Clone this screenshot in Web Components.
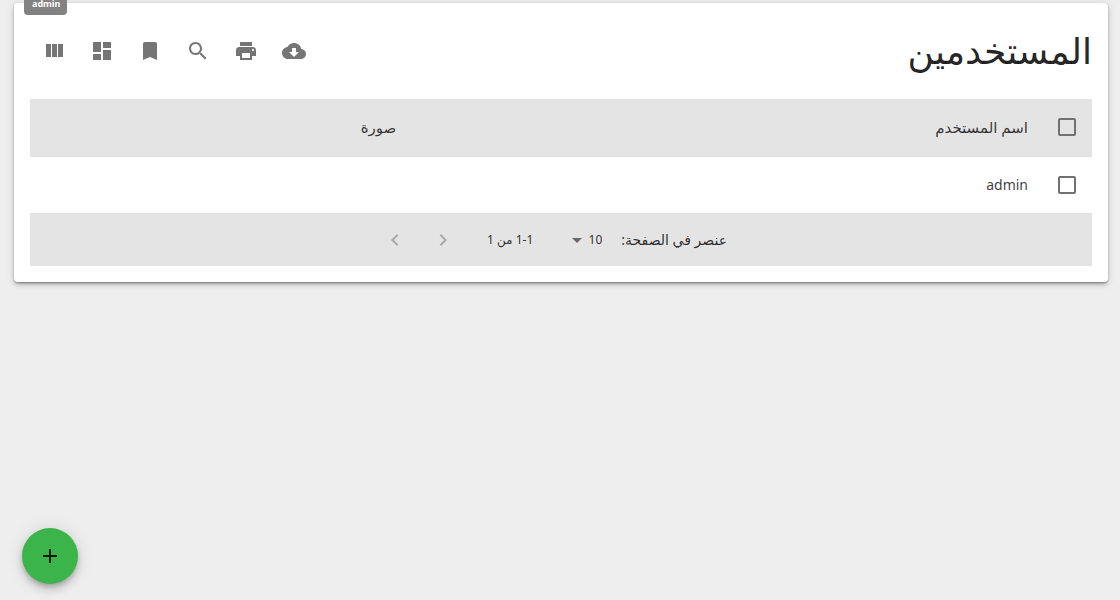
<!DOCTYPE html>
<html lang="ar" dir="rtl">
<head>
<meta charset="utf-8">
<title>المستخدمين</title>
<style>
html{background:#eee}
body{margin:0;min-height:100vh;padding:3px 12px 16px 14px;box-sizing:border-box;font-family:"Noto Sans","DejaVu Sans",sans-serif;color:rgba(0,0,0,.87)}
</style>
</head>
<body>
<users-page></users-page>
<script>
const ICONS = {
  columns: 'M10 18h5V5h-5v13zm-6 0h5V5H4v13zM16 5v13h5V5h-5z',
  dashboard: 'M3 13h8V3H3v10zm0 8h8v-6H3v6zm10 0h8V11h-8v10zm0-18v6h8V3h-8z',
  bookmark: 'M17 3H7c-1.1 0-1.99.9-1.99 2L5 21l7-3 7 3V5c0-1.1-.9-2-2-2z',
  search: 'M15.5 14h-.79l-.28-.27C15.41 12.59 16 11.11 16 9.5 16 5.91 13.09 3 9.5 3S3 5.91 3 9.5 5.91 16 9.5 16c1.61 0 3.09-.59 4.23-1.57l.27.28v.79l5 4.99L20.49 19l-4.99-5zm-6 0C7.01 14 5 11.99 5 9.5S7.01 5 9.5 5 14 7.01 14 9.5 11.99 14 9.5 14z',
  print: 'M19 8H5c-1.66 0-3 1.34-3 3v6h4v4h12v-4h4v-6c0-1.66-1.34-3-3-3zm-3 11H8v-5h8v5zm3-7c-.55 0-1-.45-1-1s.45-1 1-1 1 .45 1 1-.45 1-1 1zm-1-9H6v4h12V3z',
  download: 'M19.35 10.04C18.67 6.59 15.64 4 12 4 9.11 4 6.6 5.64 5.35 8.04 2.34 8.36 0 10.91 0 14c0 3.31 2.69 6 6 6h13c2.76 0 5-2.24 5-5 0-2.64-2.05-4.78-4.65-4.96zM17 13l-5 5-5-5h3V9h4v4h3z',
  right: 'M10 6L8.59 7.41 13.17 12l-4.58 4.59L10 18l6-6z',
  left: 'M15.41 7.41L14 6l-6 6 6 6 1.41-1.41L10.83 12z',
  add: 'M19 13h-6v6h-2v-6H5v-2h6V5h2v6h6v2z',
  arrow: 'M7 10l5 5 5-5z'
};
const svg = name => `<svg viewBox="0 0 24 24" width="24" height="24" fill="currentColor" aria-hidden="true"><path d="${ICONS[name]}"/></svg>`;
const define = (name, render) => customElements.define(name, class extends HTMLElement {
  connectedCallback() {
    if (!this.shadowRoot) this.attachShadow({mode: 'open'}).innerHTML = render(this);
  }
});

define('icon-button', el => `<style>
:host{display:block}
button{display:grid;place-items:center;width:48px;height:48px;padding:0;border:0;border-radius:50%;background:none;color:rgba(0,0,0,.54);cursor:pointer}
button:disabled{color:rgba(0,0,0,.26);cursor:default}
svg{display:block}
</style><button type="button" aria-label="${el.getAttribute('label')}" ${el.hasAttribute('disabled') ? 'disabled' : ''}>${svg(el.getAttribute('icon'))}</button>`);

define('check-box', el => `<style>
:host{display:block}
input{display:block;appearance:none;width:18px;height:18px;margin:0;box-sizing:border-box;border:2px solid #717171;border-radius:2px}
input:checked{background:#3bb54a}
</style><input type="checkbox" aria-label="${el.getAttribute('label')}">`);

define('surface-card', () => `<style>
:host{display:block;background:#fff;border-radius:4px;padding:16px;box-shadow:0 3px 3px -2px rgba(0,0,0,.2),0 3px 4px 0 rgba(0,0,0,.14),0 1px 8px 0 rgba(0,0,0,.12),0 1px 2px rgba(0,0,0,.2)}
</style><slot></slot>`);

define('page-toolbar', () => `<style>
:host{display:flex;justify-content:space-between;align-items:center;min-height:64px;margin-bottom:16px}
h1{margin:0;font-size:36px;line-height:40px;font-weight:400}
.actions{display:flex}
</style><h1><slot></slot></h1><div class="actions"><slot name="actions"></slot></div>`);

define('users-table', () => `<style>
:host{display:block;color:rgba(0,0,0,.78)}
table{width:100%;table-layout:fixed;border-collapse:separate;border-spacing:0}
.check{width:48px}.image{width:36%}
th,td{box-sizing:border-box;padding:0 16px;text-align:start;font-weight:400;line-height:20px}
th{height:58px;padding-bottom:2px;font-size:15px;background:#e4e4e4;border-bottom:1px solid #e0e0e0}
td{height:57px;font-size:14px;border-bottom:1px solid #e0e0e0}
</style><table><colgroup><col class="check"><col><col class="image"></colgroup>
<thead><tr><th><check-box label="تحديد الكل"></check-box></th><th scope="col">اسم المستخدم</th><th scope="col">صورة</th></tr></thead>
<tbody><tr><td><check-box label="تحديد admin"></check-box></td><td>admin</td><td></td></tr></tbody></table>`);

define('table-pager', () => `<style>
:host{display:flex;justify-content:center;align-items:center;box-sizing:border-box;min-height:52px;padding-inline-start:24px;background:#e4e4e4;font-size:12px;line-height:20px;color:rgba(0,0,0,.82)}
label{margin-inline-end:19px;font-size:14px}
.pick{display:grid;align-items:center;width:34px;margin-inline-end:35px;position:relative}
select{appearance:none;width:34px;height:24px;padding:0;border:0;background:none;font:inherit;color:inherit}
.pick svg{position:absolute;left:-3px;color:rgba(0,0,0,.54);pointer-events:none}
.range{margin-inline-end:20px}
nav{display:flex}
</style><label for="size">عنصر في الصفحة:</label>
<div class="pick"><select id="size"><option>10</option><option>20</option><option>50</option></select>${svg('arrow')}</div>
<span class="range">1-1 من 1</span>
<nav><icon-button icon="right" label="السابق" disabled></icon-button><icon-button icon="left" label="التالي" disabled></icon-button></nav>`);

define('user-badge', () => `<style>
:host{position:absolute;left:24px;top:0;padding:0 7px 3px 8px;height:12px;border-radius:0 0 4px 4px;background:#828282;color:#fff;font-size:9px;line-height:8px;font-weight:700}
</style><slot></slot>`);

define('add-button', () => `<style>
:host{position:fixed;left:22px;bottom:16px}
button{display:grid;place-items:center;width:56px;height:56px;padding:0;border:0;border-radius:50%;background:#3bb54a;color:rgba(0,0,0,.87);box-shadow:0 3px 5px -1px rgba(0,0,0,.2),0 6px 10px 0 rgba(0,0,0,.14),0 1px 18px 0 rgba(0,0,0,.12)}
</style><button type="button" aria-label="إضافة">${svg('add')}</button>`);

define('users-page', () => `<style>:host{display:block}</style>
<main><surface-card>
<page-toolbar>المستخدمين
<icon-button slot="actions" icon="download" label="تصدير"></icon-button>
<icon-button slot="actions" icon="print" label="طباعة"></icon-button>
<icon-button slot="actions" icon="search" label="بحث"></icon-button>
<icon-button slot="actions" icon="bookmark" label="المحفوظات"></icon-button>
<icon-button slot="actions" icon="dashboard" label="العرض"></icon-button>
<icon-button slot="actions" icon="columns" label="الأعمدة"></icon-button>
</page-toolbar>
<users-table></users-table><table-pager></table-pager>
</surface-card></main>
<user-badge>admin</user-badge><add-button></add-button>`);
</script>
</body>
</html>
